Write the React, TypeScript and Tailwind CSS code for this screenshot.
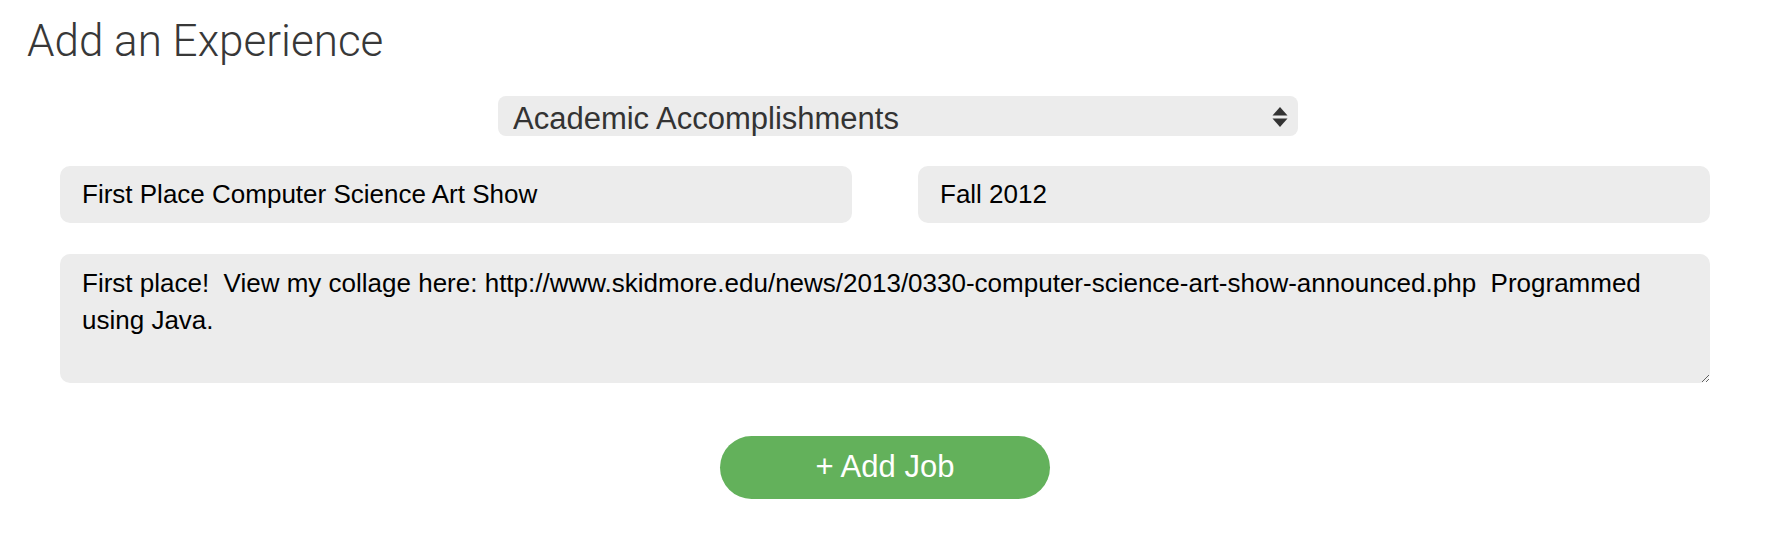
import React from 'react';

// Form card for adding a new experience entry
const DESCRIPTION =
  'First place!  View my collage here: http://www.skidmore.edu/news/2013/0330-computer-science-art-show-announced.php  Programmed using Java.';

function SortArrows() {
  return (
    <svg
      className="pointer-events-none absolute right-[10px] top-[11px]"
      width="16"
      height="20"
      viewBox="0 0 16 20"
    >
      <polygon points="8,0 15.5,8.5 0.5,8.5" fill="#333" />
      <polygon points="0.5,11.5 15.5,11.5 8,20" fill="#333" />
    </svg>
  );
}

export default function App() {
  return (
    <div className="w-[1766px] h-[544px] bg-white font-['Liberation_Sans',Arial,sans-serif]">
      <h1 className="pl-[27px] pt-[15px] text-[44px] leading-[52px] font-light text-[#383838] font-['Roboto',sans-serif]">
        Add an Experience
      </h1>

      <div className="pl-[60px] pr-[56px]">
        {/* category picker */}
        <div className="relative ml-[438px] mt-[29px] w-[800px]">
          <select
            defaultValue="academic"
            className="w-full h-[40px] appearance-none rounded-[8px] bg-[#ececec] pl-[15px] pr-10 text-[31px] text-[#333] outline-none"
          >
            <option value="academic">Academic Accomplishments</option>
            <option value="work">Work Experience</option>
            <option value="volunteer">Volunteer Work</option>
          </select>
          <SortArrows />
        </div>

        {/* title + date */}
        <div className="mt-[30px] flex gap-[66px]">
          <input
            defaultValue="First Place Computer Science Art Show"
            className="h-[57px] flex-1 rounded-[10px] bg-[#ececec] px-[22px] text-[26px] text-black outline-none"
          />
          <input
            defaultValue="Fall 2012"
            className="h-[57px] flex-1 rounded-[10px] bg-[#ececec] px-[22px] text-[26px] text-black outline-none"
          />
        </div>

        <textarea
          defaultValue={DESCRIPTION}
          className="mt-[31px] block h-[129px] w-full rounded-[10px] bg-[#ececec] px-[22px] pt-[11px] text-[26px] leading-[37px] text-black outline-none"
        />

        <button className="mx-auto mt-[53px] block h-[63px] w-[330px] rounded-full bg-[#63b15b] text-[31px] text-white">
          + Add Job
        </button>
      </div>
    </div>
  );
}
